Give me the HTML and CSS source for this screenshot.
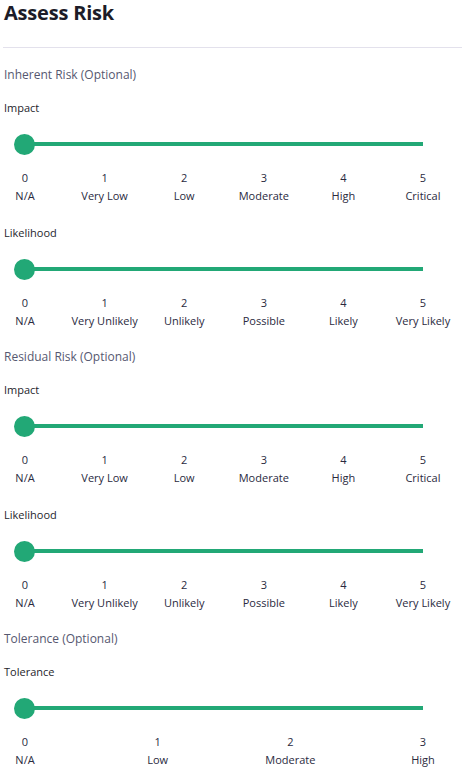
FILE: index.html
```html
<!DOCTYPE html>
<html lang="en">
<head>
<meta charset="utf-8">
<title>Assess Risk</title>
<link rel="stylesheet" href="styles.css">
</head>
<body>
<div class="page">
  <h1 class="title">Assess Risk</h1>
  <hr class="divider">

  <section class="section">
    <h2 class="section-title">Inherent Risk (Optional)</h2>
    <div class="field">
      <div class="field-label">Impact</div>
      <div class="slider" role="slider" aria-valuemin="0" aria-valuemax="5" aria-valuenow="0"><div class="track"></div><div class="thumb"></div></div>
      <div class="ticks">
        <div class="tick"><span>0</span><span>N/A</span></div>
        <div class="tick"><span>1</span><span>Very Low</span></div>
        <div class="tick"><span>2</span><span>Low</span></div>
        <div class="tick"><span>3</span><span>Moderate</span></div>
        <div class="tick"><span>4</span><span>High</span></div>
        <div class="tick"><span>5</span><span>Critical</span></div>
      </div>
    </div>
    <div class="field">
      <div class="field-label">Likelihood</div>
      <div class="slider" role="slider" aria-valuemin="0" aria-valuemax="5" aria-valuenow="0"><div class="track"></div><div class="thumb"></div></div>
      <div class="ticks">
        <div class="tick"><span>0</span><span>N/A</span></div>
        <div class="tick"><span>1</span><span>Very Unlikely</span></div>
        <div class="tick"><span>2</span><span>Unlikely</span></div>
        <div class="tick"><span>3</span><span>Possible</span></div>
        <div class="tick"><span>4</span><span>Likely</span></div>
        <div class="tick"><span>5</span><span>Very Likely</span></div>
      </div>
    </div>
  </section>

  <section class="section">
    <h2 class="section-title">Residual Risk (Optional)</h2>
    <div class="field">
      <div class="field-label">Impact</div>
      <div class="slider" role="slider" aria-valuemin="0" aria-valuemax="5" aria-valuenow="0"><div class="track"></div><div class="thumb"></div></div>
      <div class="ticks">
        <div class="tick"><span>0</span><span>N/A</span></div>
        <div class="tick"><span>1</span><span>Very Low</span></div>
        <div class="tick"><span>2</span><span>Low</span></div>
        <div class="tick"><span>3</span><span>Moderate</span></div>
        <div class="tick"><span>4</span><span>High</span></div>
        <div class="tick"><span>5</span><span>Critical</span></div>
      </div>
    </div>
    <div class="field">
      <div class="field-label">Likelihood</div>
      <div class="slider" role="slider" aria-valuemin="0" aria-valuemax="5" aria-valuenow="0"><div class="track"></div><div class="thumb"></div></div>
      <div class="ticks">
        <div class="tick"><span>0</span><span>N/A</span></div>
        <div class="tick"><span>1</span><span>Very Unlikely</span></div>
        <div class="tick"><span>2</span><span>Unlikely</span></div>
        <div class="tick"><span>3</span><span>Possible</span></div>
        <div class="tick"><span>4</span><span>Likely</span></div>
        <div class="tick"><span>5</span><span>Very Likely</span></div>
      </div>
    </div>
  </section>

  <section class="section">
    <h2 class="section-title">Tolerance (Optional)</h2>
    <div class="field">
      <div class="field-label">Tolerance</div>
      <div class="slider" role="slider" aria-valuemin="0" aria-valuemax="3" aria-valuenow="0"><div class="track"></div><div class="thumb"></div></div>
      <div class="ticks">
        <div class="tick"><span>0</span><span>N/A</span></div>
        <div class="tick"><span>1</span><span>Low</span></div>
        <div class="tick"><span>2</span><span>Moderate</span></div>
        <div class="tick"><span>3</span><span>High</span></div>
      </div>
    </div>
  </section>
</div>
</body>
</html>
```

FILE: styles.css
```css
html, body {
  margin: 0;
  padding: 0;
  background: #ffffff;
}

body {
  font-family: "Open Sans", "Noto Sans", "Liberation Sans", sans-serif;
  color: #24243a;
}

.page {
  width: 462px;
  padding-left: 4px;
  box-sizing: border-box;
}

.title {
  margin: 0;
  font-size: 20px;
  line-height: 26px;
  font-weight: 700;
  color: #1c1c28;
  letter-spacing: -0.2px;
}

.divider {
  margin: 21px 0 0 -1px;
  border: 0;
  height: 1px;
  background: #e3e1ec;
}

.section {
  display: flex;
  flex-direction: column;
}

.section-title {
  margin: 18px 0 0 0;
  font-size: 12px;
  line-height: 18px;
  font-weight: 400;
  color: #565870;
}

.field {
  display: flex;
  flex-direction: column;
}

.section-title + .field {
  margin-top: 16px;
}

.field + .field {
  margin-top: 20px;
}

.field-label {
  font-size: 11px;
  line-height: 16px;
  color: #1e1e2c;
}

.slider {
  position: relative;
  width: 420px;
  height: 22px;
  margin: 17px 0 0 10px;
}

.track {
  height: 4px;
  margin: 9px 11px 0 11px;
  background: #22a876;
}

.thumb {
  position: absolute;
  left: 0;
  top: 0.5px;
  width: 21px;
  height: 21px;
  border-radius: 50%;
  background: #22a876;
}

.ticks {
  display: flex;
  justify-content: space-between;
  width: 448px;
  margin: 14px 0 0 -4px;
}

.tick {
  width: 50px;
  display: flex;
  flex-direction: column;
  align-items: center;
  font-size: 11px;
  line-height: 18px;
  color: #2a2a3e;
  white-space: nowrap;
}
```
